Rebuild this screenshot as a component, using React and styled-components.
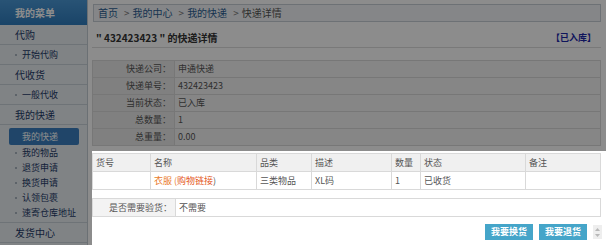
import React from 'react';
import styled, { createGlobalStyle } from 'styled-components';

const GlobalStyle = createGlobalStyle`
    *{box-sizing:border-box;}
    body{margin:0; background:#fff; font-family:"Noto Sans CJK SC", "Liberation Sans", sans-serif; font-size:9px; color:#555;}
`;

const Page = styled.div`
    position:relative;
    display:flex;
    width:606px;
    height:245px;
    overflow:hidden;
    background:#fff;
`;

const Sidebar = styled.div`
    width:88px;
    flex:none;
    background:#e9eef2;
    border-right:1px solid #c3ccd4;
`;

const MenuTitle = styled.div`
    height:25px;
    line-height:25px;
    padding-left:15px;
    font-size:10px;
    color:#fff;
    font-weight:bold;
    background:linear-gradient(#4a98d6, #2f7cbd);
`;

const MenuItem = styled.div`
    height:20px;
    line-height:19px;
    font-size:10px;
    padding-left:${p => (p.sub ? '22px' : '15px')};
    color:#1d3a68;
    border-bottom:1px solid #c8d1d9;
    position:relative;
    ${p => p.sub && `
        font-size:9px;
        &::before{content:''; position:absolute; left:15px; top:9px; width:2px; height:2px; background:#a9b4bf;}
    `}
`;

const SubList = styled.div`
    padding:3px 0 2px;
    border-bottom:1px solid #c8d1d9;
`;

const SubLink = styled.div`
    position:relative;
    height:15px;
    line-height:15px;
    padding-left:22px;
    color:#1d3a68;
    &::before{content:''; position:absolute; left:15px; top:7px; width:2px; height:2px; background:#a9b4bf;}
`;

const ActiveLink = styled.div`
    margin:0 8px 0 9px;
    height:17px;
    line-height:17px;
    padding-left:13px;
    color:#fff;
    border-radius:2px;
    background:#3b7fbf;
`;

const Main = styled.div`
    flex:1;
    padding:4px 5px 0 4px;
    display:flex;
    flex-direction:column;
`;

const Crumbs = styled.div`
    height:18px;
    line-height:16px;
    padding-left:4px;
    border:1px solid #c6ced6;
    background:#f3f5f7;
    color:#555;
    margin-left:1px;
    font-size:10px;
    a{color:#2b5d93; text-decoration:none;}
    span{margin:0 3px 0 6px; color:#777;}
`;

const TitleRow = styled.div`
    margin-top:6px;
    height:20px;
    line-height:19px;
    display:flex;
    align-items:center;
    justify-content:space-between;
    padding:0 5px 0 4px;
    border-bottom:1px solid #dcdcdc;
`;

const Title = styled.div`
    font-weight:bold;
    font-size:10px;
    color:#333;
`;

const Status = styled.div`
    font-weight:bold;
    color:#1d27a8;
`;

const Grid = styled.div`
    display:grid;
    grid-template-columns:${p => p.cols};
    margin-top:${p => p.top}px;
    border-top:1px solid #d9d9d9;
    border-left:1px solid #d9d9d9;
`;

const Cell = styled.div`
    height:${p => p.h || 17}px;
    line-height:${p => (p.h || 17) - 1}px;
    padding:0 ${p => (p.label ? '3px' : '3px')};
    text-align:${p => (p.label ? 'right' : 'left')};
    background:${p => p.bg || '#fff'};
    border-right:1px solid #d9d9d9;
    border-bottom:1px solid #d9d9d9;
    color:#555;
    white-space:nowrap;
    overflow:hidden;
`;

const Tint = styled.span`
    color:${p => p.c};
`;

const Actions = styled.div`
    margin-top:7px;
    display:flex;
    justify-content:flex-end;
    align-items:center;
    gap:6px;
    margin-right:-1px;
`;

const Button = styled.div`
    width:48px;
    height:16px;
    line-height:16px;
    text-align:center;
    font-weight:bold;
    color:#fff;
    background:#45a5c9;
`;

const Spinner = styled.div`
    width:9px;
    height:14px;
    background:#eee;
    display:flex;
    align-items:center;
    justify-content:center;
`;

const Mask = styled.div`
    position:absolute;
    background:rgba(0,0,0,0.45);
    left:0;
    top:${p => p.top}px;
    width:${p => p.w}px;
    height:${p => p.h}px;
`;

const infoRows = [
    ['快递公司：', '申通快递'],
    ['快递单号：', '432423423'],
    ['当前状态：', '已入库'],
    ['总数量：', '1'],
    ['总重量：', '0.00'],
];

const heads = ['货号', '名称', '品类', '描述', '数量', '状态', '备注'];
const cols = '58px 106px 55px 80px 29px 105px 1fr';

export default function App(){
    return(
        <>
            <GlobalStyle />
            <Page>
                <Sidebar>
                    <MenuTitle>我的菜单</MenuTitle>
                    <MenuItem>代购</MenuItem>
                    <MenuItem sub>开始代购</MenuItem>
                    <MenuItem>代收货</MenuItem>
                    <MenuItem sub>一般代收</MenuItem>
                    <MenuItem>我的快递</MenuItem>
                    <SubList>
                        <ActiveLink>我的快递</ActiveLink>
                        <SubLink>我的物品</SubLink>
                        <SubLink>退货申请</SubLink>
                        <SubLink>换货申请</SubLink>
                        <SubLink>认领包裹</SubLink>
                        <SubLink>速寄仓库地址</SubLink>
                    </SubList>
                    <MenuItem>发货中心</MenuItem>
                </Sidebar>
                <Main>
                    <Crumbs>
                        <a href="#">首页</a><span>&gt;</span><a href="#">我的中心</a><span>&gt;</span><a href="#">我的快递</a><span>&gt;</span>快递详情
                    </Crumbs>
                    <TitleRow>
                        <Title>" 432423423 "  的快递详情</Title>
                        <Status>【已入库】</Status>
                    </TitleRow>
                    <Grid cols="82px 1fr" top={12}>
                        {infoRows.map(([k, v]) => (
                            <React.Fragment key={k}>
                                <Cell label bg="#e9e9e9">{k}</Cell>
                                <Cell bg="#f5f5f5">{v}</Cell>
                            </React.Fragment>
                        ))}
                    </Grid>
                    <Grid cols={cols} top={7}>
                        {heads.map(h => <Cell key={h} h={18} bg="#f0f0f0">{h}</Cell>)}
                        <Cell h={18} />
                        <Cell h={18}>
                            <Tint c="#ea7d2c">衣服 (</Tint><Tint c="#e4571c">购物链接</Tint>)
                        </Cell>
                        <Cell h={18}>三类物品</Cell>
                        <Cell h={18}>XL码</Cell>
                        <Cell h={18}>1</Cell>
                        <Cell h={18}>已收货</Cell>
                        <Cell h={18} />
                    </Grid>
                    <Grid cols="83px 1fr" top={8}>
                        <Cell h={18} label bg="#f3f3f3">是否需要验货：</Cell>
                        <Cell h={18}>不需要</Cell>
                    </Grid>
                    <Actions>
                        <Button>我要换货</Button>
                        <Button>我要退货</Button>
                        <Spinner>
                            <svg width="7" height="11" viewBox="0 0 7 11">
                                <path d="M3.5 1 L6 4 L1 4 Z" fill="#b8b8b8" />
                                <path d="M3.5 10 L6 7 L1 7 Z" fill="#b8b8b8" />
                            </svg>
                        </Spinner>
                    </Actions>
                </Main>
                <Mask top={0} w={606} h={151} />
                <Mask top={151} w={92} h={94} />
            </Page>
        </>
    );
}
